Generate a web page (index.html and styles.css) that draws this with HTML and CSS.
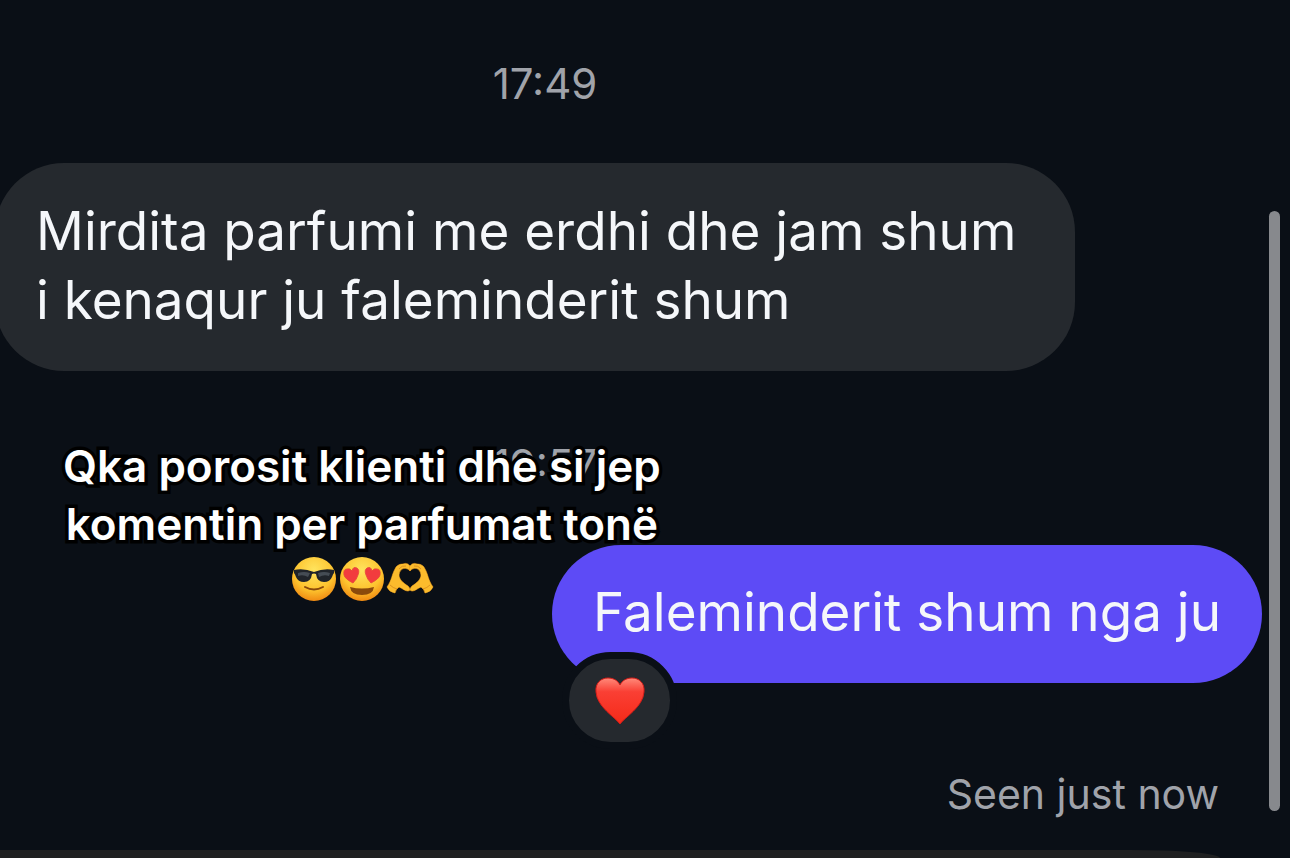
FILE: index.html
```
<!DOCTYPE html>
<html lang="sq">

<head>
    <meta charset="UTF-8">
    <meta name="viewport" content="width=device-width, initial-scale=1.0">
    <title>Chat</title>
    <link rel="stylesheet" href="styles.css">
</head>

<body>
    <div class="screen">
        <main class="chat">
            <time class="time">17:49</time>
            <p class="bubble received">Mirdita parfumi me erdhi dhe jam shum<br>i kenaqur ju faleminderit shum</p>
            <time class="time">19:57</time>
            <div class="bubble sent">
                Faleminderit shum nga ju
                <button class="reaction" type="button" aria-label="Love">
                    <svg viewBox="0 0 50 48">
                        <defs>
                            <linearGradient id="heart" x1="0" y1="0" x2="0" y2="1">
                                <stop offset="0" stop-color="#ff8a7a" />
                                <stop offset="0.3" stop-color="#fa3f34" />
                                <stop offset="1" stop-color="#f52a18" />
                            </linearGradient>
                        </defs>
                        <path fill="url(#heart)" stroke="#d51c18" d="M25 47C20 40 2 30 1 15C0 6 6 1 13 1C19 1 23 4 25 8C27 4 31 1 37 1C44 1 50 6 49 15C48 30 30 40 25 47Z" />
                    </svg>
                </button>
            </div>
            <p class="seen">Seen just now</p>
        </main>

        <div class="caption">
            Qka porosit klienti dhe si jep<br>komentin per parfumat tonë
            <div class="emojis">
                <svg viewBox="0 0 48 48">
                    <defs>
                        <radialGradient id="face" cx="0.5" cy="0.3" r="0.7">
                            <stop offset="0" stop-color="#ffe45e" />
                            <stop offset="0.65" stop-color="#fdc32e" />
                            <stop offset="1" stop-color="#f08a12" />
                        </radialGradient>
                    </defs>
                    <circle cx="24" cy="24" r="22" fill="url(#face)" />
                    <path fill="#20242a" d="M4 15Q14 13 24 17Q34 13 44 15V18Q43 19 42 22Q40 27 34 27Q27 27 26 19Q24 18 22 19Q21 27 14 27Q8 27 6 22Q5 19 4 18Z" />
                    <path fill="#454c54" d="M8 18Q14 16 20 18L18 22Q13 19 8 21ZM28 18Q34 16 40 18L39 21Q34 19 29 22Z" />
                    <path fill="none" stroke="#8a4a0b" stroke-width="2" stroke-linecap="round" d="M15 32Q24 37 33 32" />
                </svg>
                <svg viewBox="0 0 48 48">
                    <circle cx="24" cy="24" r="22" fill="url(#face)" />
                    <path fill="#f23c3e" stroke="#cf2430" stroke-width="0.6" d="M15 28Q7 24 6 20Q5 14 9 14Q12 13 14 16Q15 11 19 13Q22 15 20 20Q19 24 15 28ZM33 28Q41 24 42 20Q43 14 39 14Q36 13 34 16Q33 11 29 13Q26 15 28 20Q29 24 33 28Z" />
                    <path fill="#8a4a0b" d="M12 32Q24 35 36 32Q35 40 24 40Q13 40 12 32Z" />
                </svg>
                <svg viewBox="0 0 48 48">
                    <g id="hand">
                        <path fill="#fcbb2c" stroke="#e28b12" stroke-width="0.7" stroke-linejoin="round" d="M24 11C22 8 19 8 17 9C13 9 10 11 9 14C6 19 6 25 1 32Q3 37 9 38Q10 34 13 32C16 33 21 38 24 35Q24 33 22 31C17 28 13 24 13 20C14 12 21 12 24 16Z" />
                        <path fill="none" stroke="#dc9220" d="M4 30Q7 33 11 34M13 14Q16 10 20 11" />
                    </g>
                    <use href="#hand" transform="matrix(-1 0 0 1 48 0)" />
                </svg>
            </div>
        </div>

        <div class="scrollbar"></div>
        <div class="composer"></div>
    </div>
</body>

</html>
```
FILE: styles.css
```
* {
    box-sizing: border-box;
}

body {
    margin: 0;
    background-color: #0a0f16;
    font-family: "Inter", sans-serif;
}

.screen {
    position: relative;
    min-height: 100vh;
    overflow: hidden;
    display: flex;
    flex-direction: column;
}

.chat {
    flex: 1;
    display: flex;
    flex-direction: column;
    padding: 60px 28px 0 0;
}

.time {
    margin-right: 172px;
    text-align: center;
    font-size: 42px;
    line-height: 48px;
    color: #a0a3aa;
}

.bubble {
    margin: 0;
    border-radius: 69px;
    font-size: 53px;
    line-height: 69px;
    color: #f5f7fa;
    white-space: nowrap;
}

.received {
    align-self: flex-start;
    margin: 55px 0 70px -5px;
    padding: 34px 59px 36px 41px;
    background-color: #25292e;
}

.sent {
    position: relative;
    align-self: flex-end;
    margin-top: 56px;
    padding: 33px 41px 36px;
    background-color: #5d4bf6;
}

.reaction {
    position: absolute;
    left: 10px;
    bottom: -66px;
    display: flex;
    align-items: center;
    justify-content: center;
    width: 115px;
    height: 97px;
    padding: 0;
    border: 7px solid #0a0f16;
    border-radius: 49px;
    background-color: #25292e;
}

.reaction svg {
    width: 50px;
    height: 48px;
}

.seen {
    align-self: flex-end;
    margin: 87px 43px 32px 0;
    font-size: 41px;
    line-height: 48px;
    color: #a0a3aa;
}

.caption {
    position: absolute;
    top: 437px;
    left: 63px;
    font-size: 44px;
    font-weight: 600;
    line-height: 58px;
    text-align: center;
    white-space: nowrap;
    color: #fff;
    -webkit-text-stroke: 7px #000;
    paint-order: stroke fill;
}

.emojis {
    display: flex;
    justify-content: center;
    padding-top: 2px;
}

.emojis svg {
    width: 48px;
    height: 48px;
}

.scrollbar {
    position: absolute;
    top: 211px;
    right: 10px;
    bottom: 47px;
    width: 11px;
    border-radius: 6px;
    background-color: #87898d;
}

.composer {
    height: 8px;
    margin-right: 70px;
    border-top-right-radius: 90px 8px;
    background-color: #1f2021;
}
```
